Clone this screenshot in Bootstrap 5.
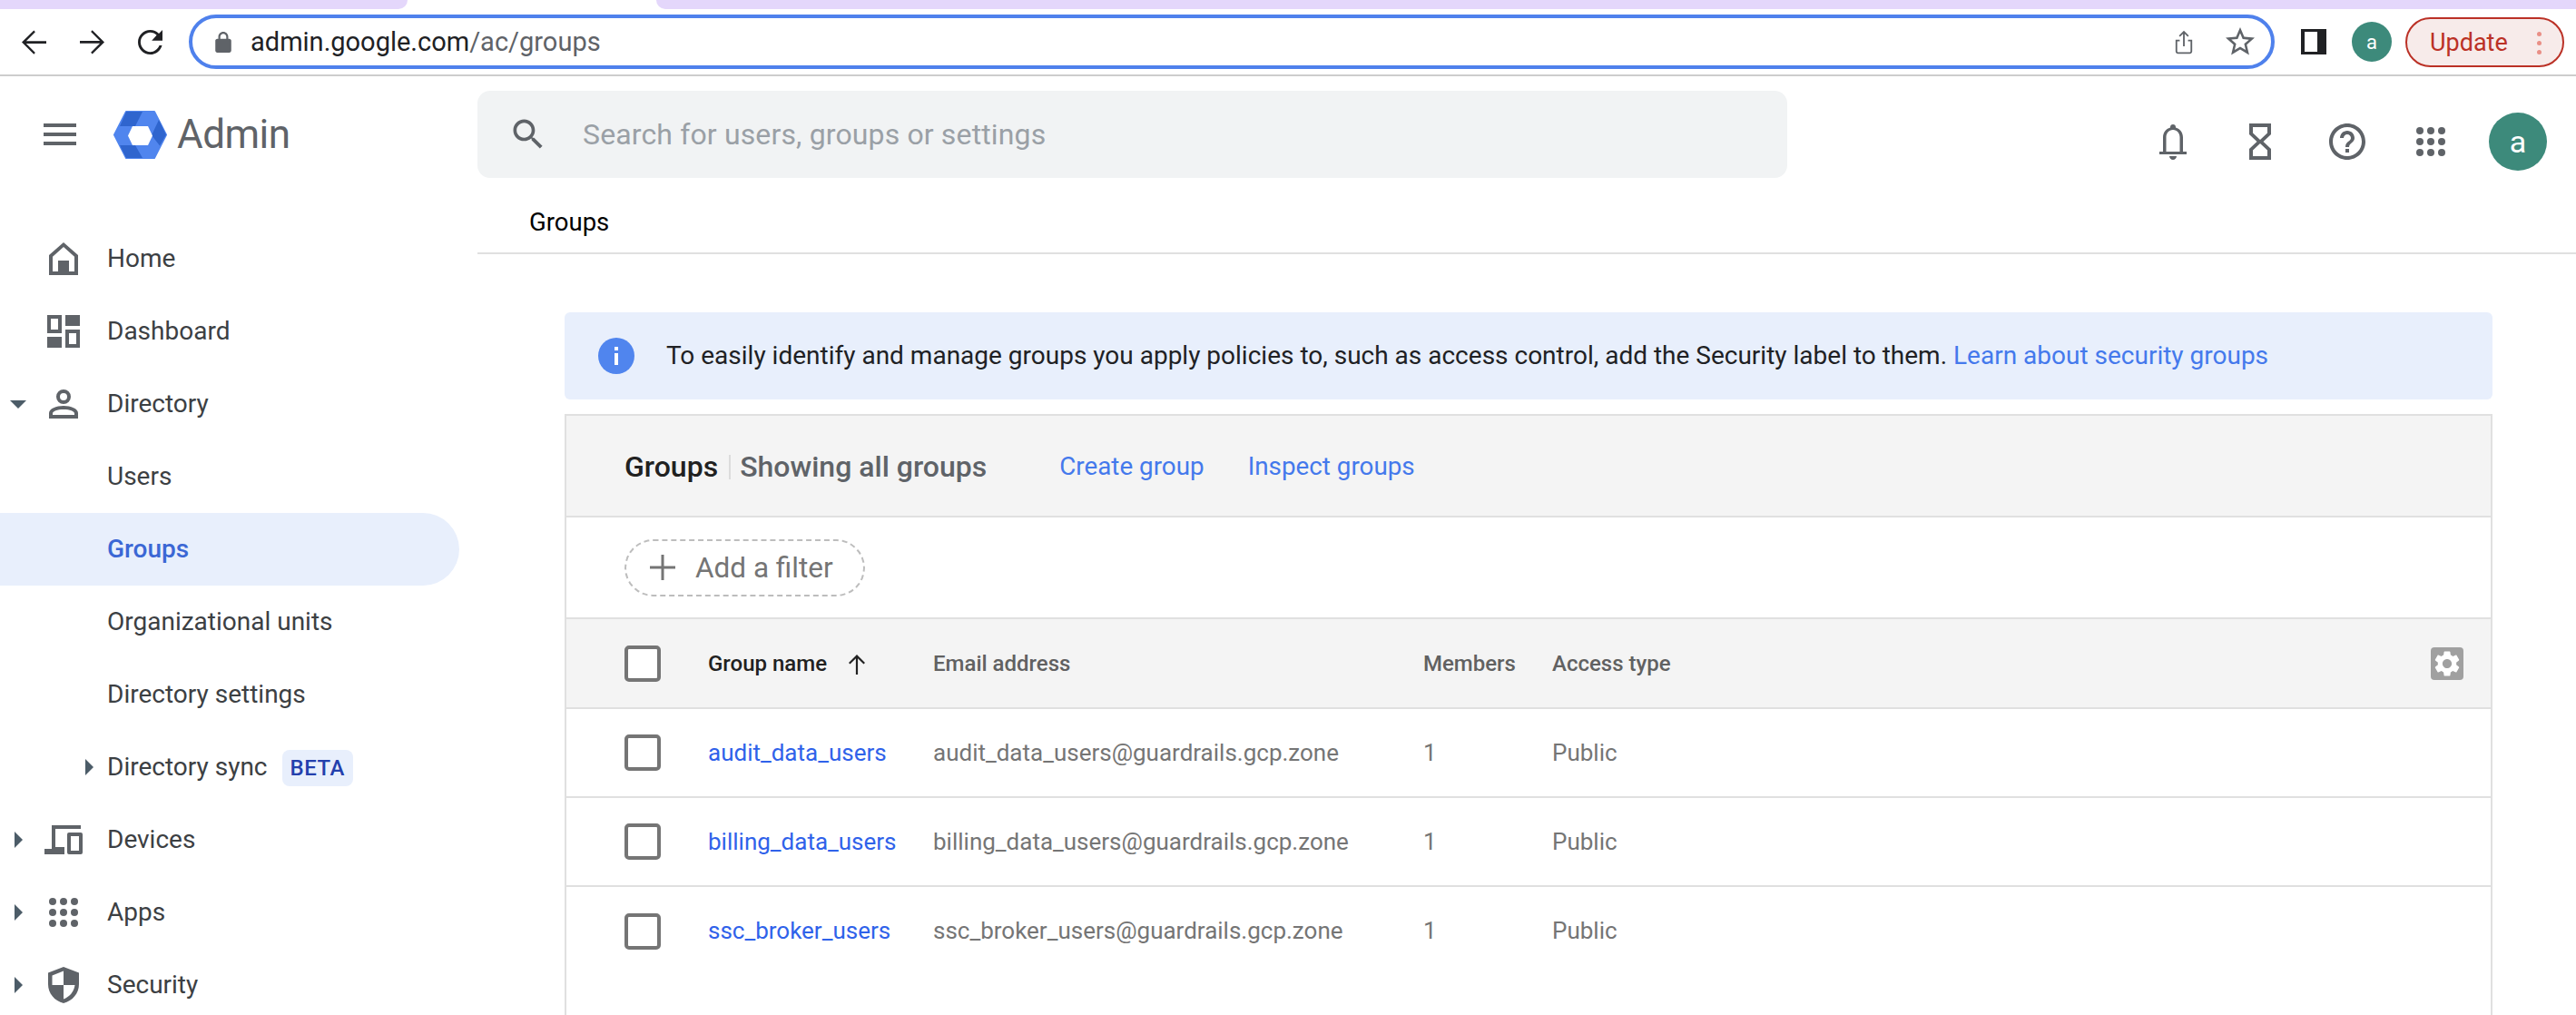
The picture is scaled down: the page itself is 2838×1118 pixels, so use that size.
<!DOCTYPE html>
<html lang="en">
<head>
    <meta charset="UTF-8">
    <title>Admin - Groups</title>
    <link href="https://cdn.jsdelivr.net/npm/bootstrap@5.3.3/dist/css/bootstrap.min.css" rel="stylesheet">
    <style>
        html, body { height: 100%; overflow: hidden; }
        body { font-family: Roboto, "Liberation Sans", sans-serif; background: #fff; color: #3c4043; }

        /* browser chrome */
        .tab-strip { height: 10px; }
        .tab-off { background: #e4d7fb; }
        .tab-off-a { width: 449px; border-bottom-right-radius: 10px; }
        .tab-on { width: 274px; }
        .tab-off-b { flex: 1; border-bottom-left-radius: 10px; }
        .chrome-bar { height: 74px; border-bottom: 2px solid #cdcdcd; padding-left: 24px; }
        .chrome-btn { width: 27px; height: 27px; fill: #202124; }
        .btn-back, .btn-fwd { margin-right: 37px; }
        .omnibox { width: 2298px; height: 60px; margin-left: 29px; border: 4px solid #4f81ec; border-radius: 30px; padding: 0 18px 0 25px; flex-shrink: 0; }
        .omni-url { font-size: 29px; color: #202124; margin-left: 21px; padding-top: 2px; }
        .omni-path { color: #5f6368; }
        .omni-ico { fill: #5f6368; }
        .star-ico { margin-left: 35px; }
        .side-panel { width: 28px; height: 28px; border: solid #202124; border-width: 3px 10px 3px 4px; margin-left: 29px; }
        .mini-avatar { width: 44px; height: 44px; background: #3d8a7b; color: #fff; font-size: 22px; margin-left: 28px; }
        .update-pill { width: 175px; height: 55px; margin-left: 15px; border: 2px solid #bb3126; border-radius: 28px; background: #f7ebea; color: #bb3126; font-size: 27px; padding: 2px 23px 0 25px; }
        .update-dots i { display: block; width: 5px; height: 5px; margin: 5px 0; border-radius: 50%; background: #e98f86; }

        /* app header */
        .app-head { height: 128px; padding-top: 16px; }
        .head-left { width: 526px; padding-left: 48px; height: 96px; }
        .burger { width: 36px; }
        .burger i { display: block; height: 4px; margin-bottom: 6px; background: #5f6368; }
        .burger i:last-child { margin-bottom: 0; }
        .logo-mark { margin-left: -7px; }
        .logo-word { font-size: 44px; color: #5f6368; margin-left: 11px; letter-spacing: -.5px; }
        .search-box { width: 1443px; height: 96px; background: #f1f3f4; border-radius: 14px; padding-left: 34px; }
        .search-text { font-size: 32px; letter-spacing: .14px; color: #9aa0a6; margin-left: 38px; }
        .head-ico { fill: #5f6368; }
        .head-tools { padding-right: 32px; }
        .ico-glass { margin-left: 67px; }
        .ico-help { margin-left: 60px; }
        .ico-grid { margin-left: 52px; }
        .big-avatar { width: 64px; height: 64px; background: #3d8a7b; color: #fff; font-size: 34px; margin-left: 48px; }

        /* sidebar */
        .side-nav { width: 526px; padding-top: 33px; }
        .nav-line { display: grid; grid-template-columns: 40px 60px 1fr; align-items: center; height: 80px; width: 506px; font-size: 28px; color: #3c4043; text-decoration: none; }
        .nav-line.is-on { background: #e8effc; color: #3b67d5; font-weight: 500; border-radius: 0 40px 40px 0; }
        .nav-label { padding-left: 18px; white-space: nowrap; }
        .nav-ico { justify-self: center; fill: #5f6368; }
        .nav-caret { justify-self: center; fill: #4c5c68; }
        .nav-subcaret { justify-self: end; margin-right: -3px; fill: #4c5c68; }
        .beta-tag { display: inline-block; margin-left: 16px; padding: 6px 9px; background: #e8effc; color: #2340ad; border-radius: 8px; font-size: 24px; font-weight: 500; letter-spacing: .5px; line-height: 28px; }

        /* main */
        .crumb-bar { height: 68px; border-bottom: 2px solid #e0e0e0; padding-left: 57px; font-size: 27.500px; color: #000; }
        .main-pad { padding: 64px 92px 0 96px; }
        .note-box { height: 96px; background: #e8effc; border-radius: 6px; padding-left: 37px; font-size: 28px; color: #202124; margin-bottom: 16px; }
        .note-text { margin-left: 35px; }
        .note-link, .blue-link { color: #4479ec; text-decoration: none; }
        .list-panel { border: 2px solid #e0e0e0; border-bottom: 0; height: 700px; }
        .panel-title { height: 112px; background: #f4f4f4; border-bottom: 2px solid #e0e0e0; padding: 2px 0 0 64px; font-size: 32px; }
        .panel-name { font-weight: 500; color: #212121; }
        .panel-sep { width: 2px; height: 27px; background: #dcdcdc; margin: 0 10px 0 12px; }
        .panel-sub { color: #5f6368; font-weight: 500; }
        .panel-links { font-size: 27.800px; margin-left: 80px; gap: 48px; }
        .filter-row { height: 112px; border-bottom: 2px solid #e0e0e0; padding-left: 64px; }
        .filter-pill { width: 265px; height: 63px; border: 2px dashed #bdbdbd; border-radius: 32px; padding-left: 26px; font-size: 31.500px; color: #757575; }
        .filter-pill svg { fill: #757575; margin-right: 22px; }
        .filter-pill span { padding-top: 2px; }
        .group-table { table-layout: fixed; margin: 0; --bs-table-bg: transparent; --bs-table-border-color: #e0e0e0; }
        .group-table th, .group-table td { height: 98px; padding: 0; vertical-align: middle; border-bottom: 2px solid #e0e0e0; white-space: nowrap; }
        .group-table tbody tr:last-child td { border-bottom: 0; }
        .group-table thead th { background: #f4f4f4; font-size: 24px; font-weight: 500; color: #616161; }
        .group-table thead th.sort-col { color: #212121; }
        .group-table tbody td { font-size: 26px; color: #757575; --bs-table-color-state: #757575; }
        .group-table a { color: #2f62ea; text-decoration: none; }
        .col-check { width: 156px; padding-left: 64px !important; }
        .col-group { width: 248px; }
        .col-mail { width: 540px; }
        .col-count { width: 142px; }
        .tick-box { display: block; width: 40px; height: 40px; border: 4px solid #757575; border-radius: 5px; background: #fff; }
        .sort-arrow { margin-left: 21px; vertical-align: -5px; fill: #212121; }
        .gear-btn { width: 36px; height: 36px; background: #a0a0a0; border-radius: 4px; margin-left: auto; margin-right: 30px; fill: #fff; }
    </style>
</head>
<body>
    <div class="tab-strip d-flex">
        <div class="tab-off tab-off-a"></div>
        <div class="tab-on"></div>
        <div class="tab-off tab-off-b"></div>
    </div>

    <div class="chrome-bar d-flex align-items-center">
        <svg class="chrome-btn btn-back" viewBox="4 4 16 16"><path d="M20 11.200H6.900l5.900-5.900L11.900 4.300 4 12l7.900 7.900.9-1.100-5.900-5.900H20z"/></svg>
        <svg class="chrome-btn btn-fwd" viewBox="4 4 16 16"><path d="M12.100 4.100l-.9 1.100 5.900 5.900H4v1.600h13.100l-5.900 5.900.9 1.100L20 12z"/></svg>
        <svg class="chrome-btn" viewBox="4 4 16 16"><path d="M17.650 6.350C16.200 4.900 14.210 4 12 4c-4.420 0-7.990 3.580-7.990 8s3.570 8 7.990 8c3.730 0 6.840-2.550 7.730-6h-1.800c-.82 2.330-3.320 4.300-5.930 4.300-3.310 0-6.300-2.990-6.300-6.300s2.990-6.300 6.300-6.300c1.660 0 3.140.69 4.220 1.780L13 11h7V4l-2.350 2.350z"/></svg>

        <div class="omnibox d-flex align-items-center">
            <svg class="omni-ico" width="18" height="23" viewBox="4 1 16 21"><path d="M18 8h-1V6c0-2.760-2.240-5-5-5S7 3.240 7 6v2H6c-1.100 0-2 .9-2 2v10c0 1.100.9 2 2 2h12c1.100 0 2-.9 2-2V10c0-1.100-.9-2-2-2zM9 6c0-1.660 1.340-3 3-3s3 1.340 3 3v2H9V6z"/></svg>
            <span class="omni-url">admin.google.com<span class="omni-path">/ac/groups</span></span>
            <div class="ms-auto d-flex align-items-center">
                <svg class="omni-ico" width="22" height="29" viewBox="0 0 24 30"><path d="M12 1l-6 6 1.400 1.400L11 4.800V20h2V4.800l3.600 3.600L18 7zM2 12v14c0 1.700 1.300 3 3 3h14c1.700 0 3-1.300 3-3V12h-5v2h3v12c0 .6-.4 1-1 1H5c-.6 0-1-.4-1-1V14h3v-2z"/></svg>
                <svg class="omni-ico star-ico" width="32" height="32" viewBox="2 2 20 20"><path d="M22 9.240l-7.190-.62L12 2 9.190 8.630 2 9.240l5.460 4.730L5.820 21 12 17.270 18.180 21l-1.630-7.030L22 9.240zM12 15.400l-3.760 2.270 1-4.280-3.320-2.880 4.380-.38L12 6.100l1.710 4.040 4.380.38-3.320 2.880 1 4.280L12 15.400z"/></svg>
            </div>
        </div>

        <div class="side-panel"></div>
        <div class="mini-avatar rounded-circle d-flex align-items-center justify-content-center">a</div>
        <div class="update-pill d-flex align-items-center justify-content-between">
            <span>Update</span>
            <span class="update-dots"><i></i><i></i><i></i></span>
        </div>
    </div>

    <div class="app-head d-flex">
        <div class="head-left d-flex align-items-center">
            <div class="burger me-5"><i></i><i></i><i></i></div>
            <svg class="logo-mark" width="59" height="53" viewBox="0 0 59 53">
                <path d="M14 1h31l13 25.500L45 52H14L1 26.500z" fill="#5085ee" stroke="#5085ee" stroke-width="2" stroke-linejoin="round"/>
                <path d="M14 1h18l-8 16H7zM42 27l8-17 8 16.500-7 12zM7 38h17l8 14H14z" fill="#2f65ce"/>
                <path d="M21 17h17l5 10.500L38 38H21l-5-10.500z" fill="#fff"/>
            </svg>
            <span class="logo-word">Admin</span>
        </div>
        <div class="search-box d-flex align-items-center">
            <svg class="head-ico" width="44" height="44" viewBox="0 0 24 24"><path d="M15.500 14h-.79l-.28-.27C15.410 12.590 16 11.110 16 9.500 16 5.910 13.090 3 9.500 3S3 5.910 3 9.500 5.910 16 9.500 16c1.610 0 3.090-.59 4.230-1.570l.27.28v.79l5 4.990L20.490 19l-4.990-5zm-6 0C7.010 14 5 11.990 5 9.500S7.010 5 9.500 5 14 7.010 14 9.500 11.990 14 9.500 14z"/></svg>
            <span class="search-text">Search for users, groups or settings</span>
        </div>
        <div class="head-tools ms-auto d-flex align-items-center">
            <svg class="head-ico" width="34" height="40" viewBox="0 0 34 40"><path d="M17 1c-1.800 0-3 1.300-3 3v.5C9 6 6 10.200 6 15.500V31H2v3h30v-3h-4V15.500c0-5.300-3-9.500-8-11V4c0-1.700-1.200-3-3-3zm0 6c4.600 0 7.500 3.700 7.500 8.500V31h-15V15.500C9.500 10.700 12.400 7 17 7zm-4 29c0 2.200 1.800 4 4 4s4-1.800 4-4z"/></svg>
            <svg class="head-ico ico-glass" width="24" height="40" viewBox="0 0 24 40"><path d="M0 0v12l8.500 8L0 28v12h24V28l-8.500-8L24 12V0zm4 4h16v6.500L12 18 4 10.500zm8 18l8 7.500V36H4v-6.500z"/></svg>
            <svg class="head-ico ico-help" width="48" height="48" viewBox="0 0 24 24"><path d="M11 18h2v-2h-2v2zm1-16C6.480 2 2 6.480 2 12s4.480 10 10 10 10-4.480 10-10S17.520 2 12 2zm0 18c-4.410 0-8-3.590-8-8s3.590-8 8-8 8 3.590 8 8-3.590 8-8 8zm0-14c-2.210 0-4 1.790-4 4h2c0-1.100.9-2 2-2s2 .9 2 2c0 2-3 1.750-3 5h2c0-2.250 3-2.500 3-5 0-2.210-1.790-4-4-4z"/></svg>
            <svg class="head-ico ico-grid" width="32" height="32" viewBox="0 0 32 32"><circle cx="4" cy="4" r="4"/><circle cx="16" cy="4" r="4"/><circle cx="28" cy="4" r="4"/><circle cx="4" cy="16" r="4"/><circle cx="16" cy="16" r="4"/><circle cx="28" cy="16" r="4"/><circle cx="4" cy="28" r="4"/><circle cx="16" cy="28" r="4"/><circle cx="28" cy="28" r="4"/></svg>
            <div class="big-avatar rounded-circle d-flex align-items-center justify-content-center">a</div>
        </div>
    </div>

    <div class="d-flex">
        <nav class="side-nav flex-shrink-0">
            <a class="nav-line" href="#"><span></span>
                <svg class="nav-ico" width="32" height="36" viewBox="0 0 32 36"><path d="M16 0L0 14v22h32V14zm0 5l12 10.800V32h-6V20H10v12H4V15.800z"/><path d="M10 20h12v12H10z"/></svg>
                <span class="nav-label">Home</span></a>
            <a class="nav-line" href="#"><span></span>
                <svg class="nav-ico" width="36" height="36" viewBox="0 0 36 36"><path d="M0 0h16v20H0zm4 4v12h8V4zM20 0h16v12H20zM0 24h16v12H0zM20 16h16v20H20zm4 4v12h8V20z" fill-rule="evenodd"/></svg>
                <span class="nav-label">Dashboard</span></a>
            <a class="nav-line" href="#">
                <svg class="nav-caret" width="18" height="9" viewBox="0 0 18 9"><path d="M0 0h18L9 9z"/></svg>
                <svg class="nav-ico" width="32" height="32" viewBox="0 0 32 32"><path d="M16 0a8 8 0 100 16 8 8 0 000-16zm0 4a4 4 0 110 8 4 4 0 010-8zM16 18C8 18 0 21 0 26v6h32v-6c0-5-8-8-16-8zm0 4c7 0 12 2 12 4.500V28H4v-1.500C4 24 9 22 16 22z"/></svg>
                <span class="nav-label">Directory</span></a>
            <a class="nav-line" href="#"><span></span><span></span><span class="nav-label">Users</span></a>
            <a class="nav-line is-on" href="#"><span></span><span></span><span class="nav-label">Groups</span></a>
            <a class="nav-line" href="#"><span></span><span></span><span class="nav-label">Organizational units</span></a>
            <a class="nav-line" href="#"><span></span><span></span><span class="nav-label">Directory settings</span></a>
            <a class="nav-line" href="#"><span></span>
                <svg class="nav-subcaret" width="9" height="18" viewBox="0 0 9 18"><path d="M0 0l9 9-9 9z"/></svg>
                <span class="nav-label">Directory sync<span class="beta-tag">BETA</span></span></a>
            <a class="nav-line" href="#">
                <svg class="nav-caret" width="9" height="18" viewBox="0 0 9 18"><path d="M0 0l9 9-9 9z"/></svg>
                <svg class="nav-ico" width="42" height="32" viewBox="0 0 42 32"><path d="M8 0h32v4H12v20h10v8H0v-6h8zM27 8h13a2 2 0 012 2v20a2 2 0 01-2 2H27a2 2 0 01-2-2V10a2 2 0 012-2zm2 4v16h9V12z" fill-rule="evenodd"/></svg>
                <span class="nav-label">Devices</span></a>
            <a class="nav-line" href="#">
                <svg class="nav-caret" width="9" height="18" viewBox="0 0 9 18"><path d="M0 0l9 9-9 9z"/></svg>
                <svg class="nav-ico" width="32" height="32" viewBox="0 0 32 32"><circle cx="4" cy="4" r="4"/><circle cx="16" cy="4" r="4"/><circle cx="28" cy="4" r="4"/><circle cx="4" cy="16" r="4"/><circle cx="16" cy="16" r="4"/><circle cx="28" cy="16" r="4"/><circle cx="4" cy="28" r="4"/><circle cx="16" cy="28" r="4"/><circle cx="28" cy="28" r="4"/></svg>
                <span class="nav-label">Apps</span></a>
            <a class="nav-line" href="#">
                <svg class="nav-caret" width="9" height="18" viewBox="0 0 9 18"><path d="M0 0l9 9-9 9z"/></svg>
                <svg class="nav-ico" width="34" height="40" viewBox="0 0 34 40"><path d="M17 0L0 6.500V19c0 10 7 18.500 17 21 10-2.500 17-11 17-21V6.500zm0 4.500V20H4.500V9.500zM17 20h12.500c-1 7.500-6 13-12.500 15.500z" fill-rule="evenodd"/></svg>
                <span class="nav-label">Security</span></a>
        </nav>

        <main class="flex-grow-1">
            <div class="crumb-bar d-flex align-items-center">Groups</div>
            <div class="main-pad">
                <div class="note-box d-flex align-items-center">
                    <svg width="40" height="40" viewBox="0 0 40 40"><circle cx="20" cy="20" r="20" fill="#5085ee"/><rect x="18" y="17" width="4" height="13" fill="#fff"/><rect x="18" y="10" width="4" height="4" fill="#fff"/></svg>
                    <span class="note-text">To easily identify and manage groups you apply policies to, such as access control, add the Security label to them. <a class="note-link" href="#">Learn about security groups</a></span>
                </div>

                <div class="list-panel">
                    <div class="panel-title d-flex align-items-center">
                        <span class="panel-name">Groups</span>
                        <span class="panel-sep"></span>
                        <span class="panel-sub">Showing all groups</span>
                        <div class="panel-links d-flex">
                            <a class="blue-link" href="#">Create group</a>
                            <a class="blue-link" href="#">Inspect groups</a>
                        </div>
                    </div>
                    <div class="filter-row d-flex align-items-center">
                        <div class="filter-pill d-flex align-items-center">
                            <svg width="28" height="28" viewBox="0 0 28 28"><path d="M12.500 0h3v12.500H28v3H15.500V28h-3V15.500H0v-3h12.500z"/></svg>
                            <span>Add a filter</span>
                        </div>
                    </div>
                    <table class="table group-table">
                        <thead>
                            <tr>
                                <th class="col-check"><span class="tick-box"></span></th>
                                <th class="col-group sort-col">Group name<svg class="sort-arrow" width="24" height="24" viewBox="0 0 24 24"><path d="M12 1L3 10l1.500 1.500 6.400-6.300V23h2.200V5.200l6.400 6.300L21 10z"/></svg></th>
                                <th class="col-mail">Email address</th>
                                <th class="col-count">Members</th>
                                <th>
                                    <div class="d-flex align-items-center">
                                        <span>Access type</span>
                                        <svg class="gear-btn" viewBox="-.7 -.7 25.400 25.400"><path d="M19.140 12.940c.04-.3.06-.61.06-.94 0-.32-.02-.64-.07-.94l2.030-1.580c.18-.14.23-.41.12-.61l-1.920-3.320c-.12-.22-.37-.29-.59-.22l-2.390.96c-.5-.38-1.030-.7-1.620-.94l-.36-2.540c-.04-.24-.24-.41-.48-.41h-3.840c-.24 0-.43.17-.47.41l-.36 2.540c-.59.24-1.130.57-1.620.94l-2.390-.96c-.22-.08-.47 0-.59.22L2.740 8.870c-.12.21-.08.47.12.61l2.030 1.580c-.05.3-.09.63-.09.94s.02.64.07.94l-2.030 1.580c-.18.14-.23.41-.12.61l1.920 3.320c.12.22.37.29.59.22l2.390-.96c.5.38 1.030.7 1.620.94l.36 2.540c.05.24.24.41.48.41h3.840c.24 0 .44-.17.47-.41l.36-2.540c.59-.24 1.130-.56 1.620-.94l2.390.96c.22.08.47 0 .59-.22l1.920-3.320c.12-.22.07-.47-.12-.61l-2.010-1.580zM12 15.600c-1.980 0-3.600-1.620-3.600-3.600s1.620-3.600 3.600-3.600 3.600 1.620 3.600 3.600-1.620 3.600-3.600 3.600z"/></svg>
                                    </div>
                                </th>
                            </tr>
                        </thead>
                        <tbody>
                            <tr>
                                <td class="col-check"><span class="tick-box"></span></td>
                                <td><a href="#">audit_data_users</a></td>
                                <td>audit_data_users@guardrails.gcp.zone</td>
                                <td>1</td>
                                <td>Public</td>
                            </tr>
                            <tr>
                                <td class="col-check"><span class="tick-box"></span></td>
                                <td><a href="#">billing_data_users</a></td>
                                <td>billing_data_users@guardrails.gcp.zone</td>
                                <td>1</td>
                                <td>Public</td>
                            </tr>
                            <tr>
                                <td class="col-check"><span class="tick-box"></span></td>
                                <td><a href="#">ssc_broker_users</a></td>
                                <td>ssc_broker_users@guardrails.gcp.zone</td>
                                <td>1</td>
                                <td>Public</td>
                            </tr>
                        </tbody>
                    </table>
                </div>
            </div>
        </main>
    </div>

    <script src="https://cdn.jsdelivr.net/npm/bootstrap@5.3.3/dist/js/bootstrap.bundle.min.js"></script>
</body>
</html>
